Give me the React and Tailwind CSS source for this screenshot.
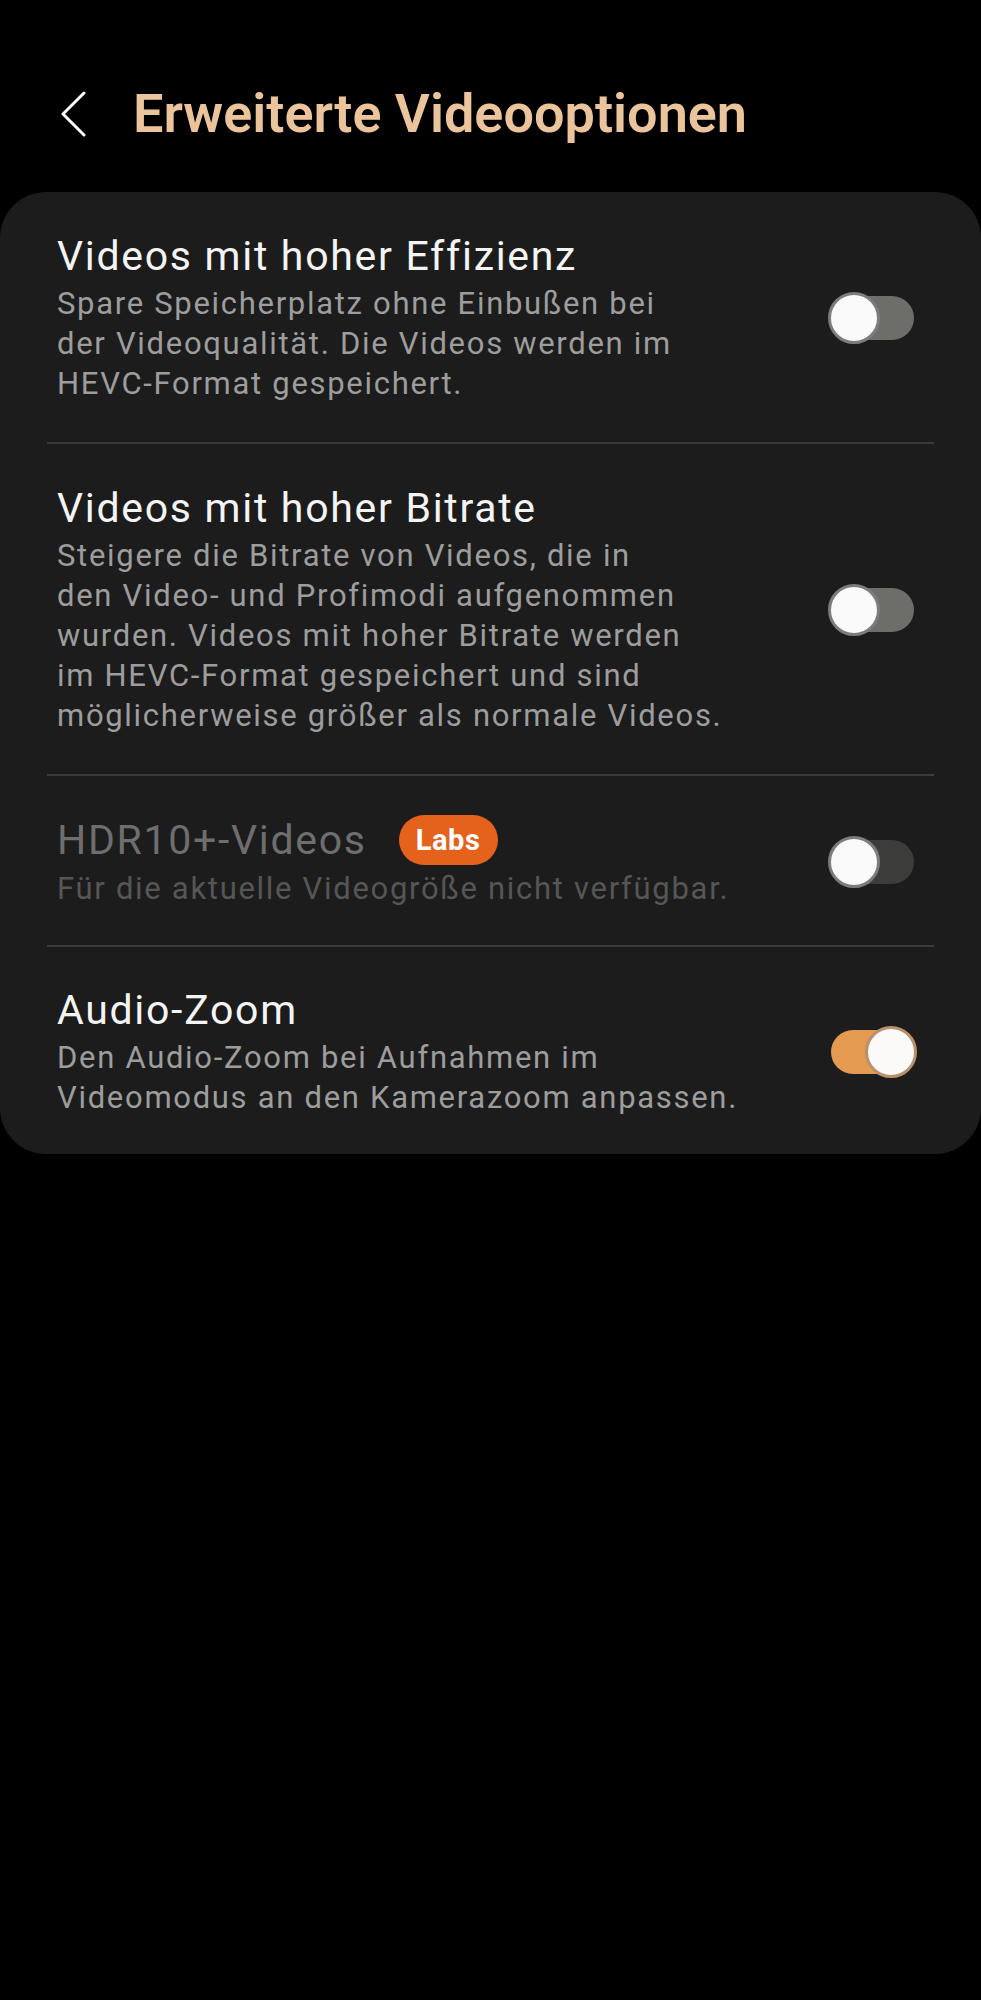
import { useState } from 'react'

const rows = [
  {
    id: 'hevc',
    title: 'Videos mit hoher Effizienz',
    lines: [
      'Spare Speicherplatz ohne Einbußen bei',
      'der Videoqualität. Die Videos werden im',
      'HEVC-Format gespeichert.',
    ],
    on: false,
    pad: 'pt-10 pb-[38px]',
  },
  {
    id: 'bitrate',
    title: 'Videos mit hoher Bitrate',
    lines: [
      'Steigere die Bitrate von Videos, die in',
      'den Video- und Profimodi aufgenommen',
      'wurden. Videos mit hoher Bitrate werden',
      'im HEVC-Format gespeichert und sind',
      'möglicherweise größer als normale Videos.',
    ],
    on: false,
    pad: 'pt-10 pb-[38px]',
  },
  {
    id: 'hdr',
    title: 'HDR10+-Videos',
    lines: ['Für die aktuelle Videogröße nicht verfügbar.'],
    badge: 'Labs',
    disabled: true,
    on: false,
    pad: 'pt-[39px] pb-[36px]',
  },
  {
    id: 'audio',
    title: 'Audio-Zoom',
    lines: ['Den Audio-Zoom bei Aufnahmen im', 'Videomodus an den Kamerazoom anpassen.'],
    on: true,
    pad: 'pt-[39px] pb-[36px]',
  },
]

function Toggle({ on, disabled, onClick }) {
  return (
    <button
      onClick={onClick}
      disabled={disabled}
      className="relative w-[89px] h-[52px] shrink-0 flex items-center"
    >
      <span
        className={
          on
            ? 'absolute left-[3px] right-[3px] h-[44px] rounded-full bg-[#e59a52]'
            : disabled
            ? 'absolute left-[3px] right-[3px] h-[44px] rounded-full bg-[#3c3c3a]'
            : 'absolute left-[3px] right-[3px] h-[44px] rounded-full bg-[#6d6d6a]'
        }
      />
      <span
        className={
          on
            ? 'absolute right-0 w-[52px] h-[52px] rounded-full bg-[#fbfaf8] border-[3px] border-[#b9916b]'
            : 'absolute left-0 w-[52px] h-[52px] rounded-full bg-[#fafafa] border-[3px] border-[#7c7c7c]'
        }
      />
    </button>
  )
}

function Row({ row, on, onToggle }) {
  const titleColor = row.disabled ? 'text-[#6e6e6e]' : 'text-[#f4f4f4]'
  const descColor = row.disabled ? 'text-[#565656]' : 'text-[#9d9d9d]'
  return (
    <div className={`flex items-center pl-[57px] pr-[64px] ${row.pad}`}>
      <div className="flex-1 min-w-0">
        <div className="flex items-center gap-[32px]">
          <span className={`text-[41px] leading-[48px] tracking-[1.7px] ${titleColor}`}>{row.title}</span>
          {row.badge && (
            <span className="h-[50px] px-[17px] rounded-full bg-[#e5621d] text-white text-[29px] font-bold leading-[50px] tracking-[0.6px]">
              {row.badge}
            </span>
          )}
        </div>
        <div className={`mt-1 text-[31px] leading-[40px] tracking-[1.7px] ${descColor}`}>
          {row.lines.map((l) => (
            <div key={l} className="whitespace-nowrap">
              {l}
            </div>
          ))}
        </div>
      </div>
      <Toggle on={on} disabled={row.disabled} onClick={onToggle} />
    </div>
  )
}

export default function App() {
  const [state, setState] = useState(() => Object.fromEntries(rows.map((r) => [r.id, r.on])))

  return (
    <div className="min-h-[2000px] bg-black font-['Roboto',sans-serif]">
      <div className="h-[192px] pt-[82px]">
        <div className="flex items-center h-[64px]">
          <svg width="26" height="46" viewBox="0 0 26 46" className="ml-[61px]">
            <polyline points="23,2 2,23 23,44" fill="none" stroke="#ffffff" strokeWidth="3" strokeLinecap="round" strokeLinejoin="round" />
          </svg>
          <h1 className="ml-[46px] text-[54px] leading-[64px] font-semibold text-[#ecc49c]">Erweiterte Videooptionen</h1>
        </div>
      </div>

      <div className="bg-[#1c1c1c] rounded-[46px]">
        {rows.map((row, i) => (
          <div key={row.id}>
            {i > 0 && <div className="mx-[47px] h-[2px] bg-[#3a3a3a]" />}
            <Row
              row={row}
              on={state[row.id]}
              onToggle={() => setState((s) => ({ ...s, [row.id]: !s[row.id] }))}
            />
          </div>
        ))}
      </div>
    </div>
  )
}
